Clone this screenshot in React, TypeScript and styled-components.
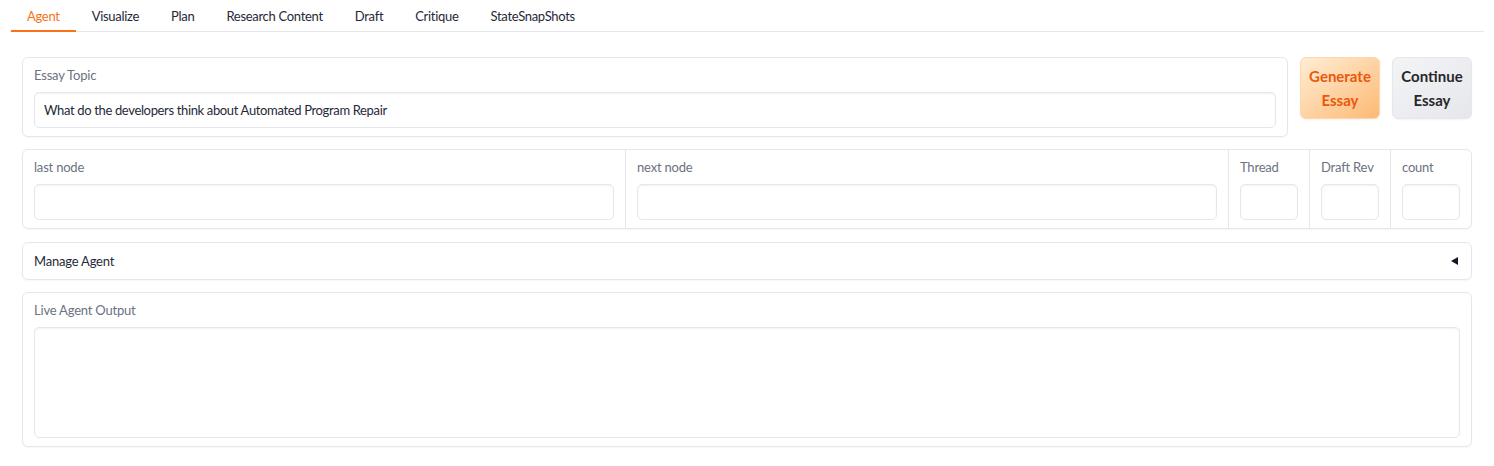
import React from "react";
import styled, { createGlobalStyle } from "styled-components";

const Global = createGlobalStyle`
  html, body { margin: 0; padding: 0; background: #ffffff; }
  body { font-family: Lato, "Noto Sans", sans-serif; color: #1f2937; }
  * { box-sizing: border-box; }
`;

const Page = styled.div`
  padding: 0 10px;
`;

const TabBar = styled.div`
  display: flex;
  padding-left: 1px;
  border-bottom: 1px solid #e5e7eb;
`;

const Tab = styled.button<{ $active?: boolean }>`
  font-family: inherit;
  font-size: 13px;
  letter-spacing: -0.3px;
  line-height: 20px;
  padding: 6px 16px 4px;
  margin-bottom: -1px;
  background: none;
  border: none;
  border-bottom: 2px solid ${(p) => (p.$active ? "#f97316" : "transparent")};
  color: ${(p) => (p.$active ? "#f97316" : "#1f2937")};
  cursor: pointer;
`;

const Panel = styled.div`
  padding: 25px 12px 20px;
  display: flex;
  flex-direction: column;
  gap: 12px;
`;

const TopRow = styled.div`
  display: flex;
  gap: 12px;
  align-items: flex-start;
`;

const Block = styled.div<{ $grow?: boolean }>`
  flex: ${(p) => (p.$grow ? "1 1 0" : "none")};
  border: 1px solid #e5e7eb;
  border-radius: 6px;
  background: #fff;
  box-shadow: 0 1px 2px rgba(0, 0, 0, 0.04);
  padding: 9px 11px 8px;
`;

const Label = styled.div`
  font-size: 13px;
  letter-spacing: -0.2px;
  line-height: 17px;
  color: #6b7280;
  margin-bottom: 8px;
  white-space: nowrap;
`;

const Input = styled.div<{ $tall?: boolean }>`
  height: ${(p) => (p.$tall ? "111px" : "36px")};
  border: 1px solid #e5e7eb;
  border-radius: 5px;
  box-shadow: inset 0 1px 2px rgba(0, 0, 0, 0.05);
  background: #fff;
  padding: 7px 9px;
  font-size: 13px;
  letter-spacing: -0.35px;
  line-height: 20px;
  color: #1f2937;
`;

const Button = styled.button<{ $primary?: boolean }>`
  width: 80px;
  height: 62px;
  flex: none;
  border-radius: 6px;
  font-family: inherit;
  font-size: 15px;
  font-weight: 700;
  line-height: 24px;
  padding: 6px 4px;
  cursor: pointer;
  border: 1px solid ${(p) => (p.$primary ? "#fed7aa" : "#e5e7eb")};
  color: ${(p) => (p.$primary ? "#ea580c" : "#27272a")};
  background: ${(p) =>
    p.$primary
      ? "linear-gradient(to bottom right, #ffedd5, #fdba74)"
      : "linear-gradient(to bottom right, #f3f4f6, #e5e7eb)"};
  box-shadow: 0 1px 2px rgba(0, 0, 0, 0.05);
`;

const Form = styled.div`
  display: flex;
  border: 1px solid #e5e7eb;
  border-radius: 6px;
  box-shadow: 0 1px 2px rgba(0, 0, 0, 0.04);
  background: #fff;
`;

const Field = styled.div<{ $narrow?: boolean }>`
  flex: ${(p) => (p.$narrow ? "0 0 81px" : "1 1 0")};
  min-width: 0;
  padding: 9px 11px 8px;
  & + & {
    border-left: 1px solid #e5e7eb;
  }
`;

const Accordion = styled.div`
  display: flex;
  align-items: center;
  justify-content: space-between;
  height: 38px;
  margin-top: 1px;
  padding: 0 13px 0 11px;
  border: 1px solid #e5e7eb;
  border-radius: 6px;
  box-shadow: 0 1px 2px rgba(0, 0, 0, 0.04);
  font-size: 13px;
  letter-spacing: -0.2px;
  color: #1f2937;
`;

const Caret = styled.span`
  width: 0;
  height: 0;
  border-top: 4px solid transparent;
  border-bottom: 4px solid transparent;
  border-right: 7px solid #111827;
`;

export default function App() {
  const tabs = ["Agent", "Visualize", "Plan", "Research Content", "Draft", "Critique", "StateSnapShots"];
  return (
    <Page>
      <Global />
      <TabBar>
        {tabs.map((t, i) => (
          <Tab key={t} $active={i === 0}>
            {t}
          </Tab>
        ))}
      </TabBar>
      <Panel>
        <TopRow>
          <Block $grow>
            <Label>Essay Topic</Label>
            <Input>What do the developers think about Automated Program Repair</Input>
          </Block>
          <Button $primary>Generate Essay</Button>
          <Button>Continue Essay</Button>
        </TopRow>
        <Form>
          <Field>
            <Label>last node</Label>
            <Input />
          </Field>
          <Field>
            <Label>next node</Label>
            <Input />
          </Field>
          <Field $narrow>
            <Label>Thread</Label>
            <Input />
          </Field>
          <Field $narrow>
            <Label>Draft Rev</Label>
            <Input />
          </Field>
          <Field $narrow>
            <Label>count</Label>
            <Input />
          </Field>
        </Form>
        <Accordion>
          <span>Manage Agent</span>
          <Caret />
        </Accordion>
        <Block>
          <Label>Live Agent Output</Label>
          <Input $tall />
        </Block>
      </Panel>
    </Page>
  );
}
